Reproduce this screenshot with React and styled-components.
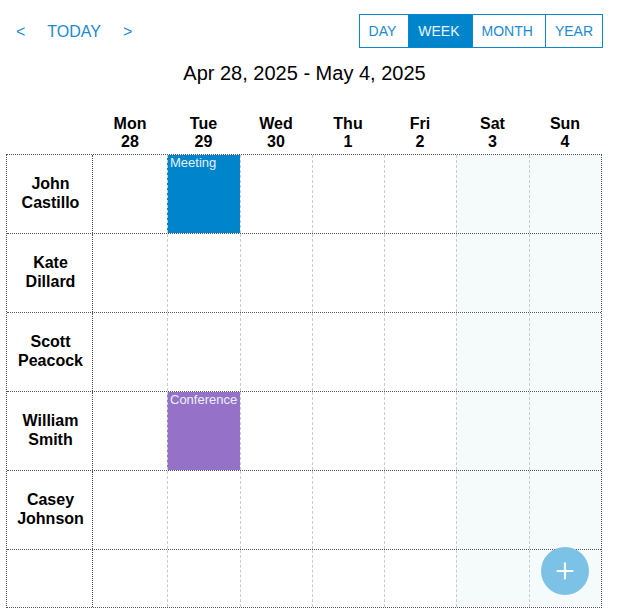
import React from 'react';
import styled, { createGlobalStyle } from 'styled-components';
import { Plus } from 'lucide-react';

const GlobalStyle = createGlobalStyle`
  *, *::before, *::after {
    box-sizing: border-box;
  }

  body {
    margin: 0;
    background: #fff;
    font-family: 'Liberation Sans', Arial, sans-serif;
    color: #000;
  }
`;

const COLUMNS = '86px 74px 73px 72px 72px 72px 73px 72px';

const Page = styled.div`
  width: 597px;
  margin-left: 6px;
`;

const Toolbar = styled.div`
  display: flex;
  align-items: center;
  justify-content: space-between;
  padding-top: 14px;
`;

const NavGroup = styled.div`
  display: flex;
  margin-left: -1px;
  padding-top: 2px;
`;

const NavButton = styled.button`
  border: none;
  background: none;
  padding: 0 11px;
  font-family: inherit;
  font-size: 16px;
  color: #1a8ad2;
  cursor: pointer;
`;

const ViewGroup = styled.div`
  display: flex;
  border: 1px solid #0a88cc;
`;

const ViewButton = styled.button`
  height: 32px;
  border: none;
  padding: 0 12px 0 9px;
  font-family: inherit;
  font-size: 14px;
  cursor: pointer;
  color: ${(p) => (p.$active ? '#e8f4ff' : '#1a8ad2')};
  background: ${(p) => (p.$active ? '#0085cc' : '#fff')};

  & + & {
    border-left: 1px solid #0a88cc;
  }

  &:last-child {
    padding-right: 9px;
  }
`;

const Title = styled.h2`
  margin: 14px 0 0;
  text-align: center;
  font-size: 20px;
  font-weight: 400;
  line-height: 23px;
`;

const Header = styled.div`
  display: grid;
  grid-template-columns: ${COLUMNS};
  margin-top: 30px;
  padding-left: 1px;
`;

const DayLabel = styled.div`
  text-align: center;
  font-size: 16px;
  font-weight: 700;
  line-height: 18.4px;
`;

const Board = styled.div`
  position: relative;
  margin-top: 2px;
  width: 596px;
  border: 1px dotted #555;
`;

const Row = styled.div`
  display: grid;
  grid-template-columns: ${COLUMNS};
  height: ${(p) => p.$h}px;

  & + & {
    border-top: 1px dotted #555;
  }
`;

const NameCell = styled.div`
  display: flex;
  align-items: center;
  justify-content: center;
  text-align: center;
  padding-left: 2px;
  border-right: 1px dotted #555;
  font-size: 16px;
  font-weight: 700;
  line-height: 18.4px;
`;

const DayCell = styled.div`
  border-left: ${(p) => (p.$first ? 'none' : '1px dashed #ccc')};
  background: ${(p) => p.$bg};
  padding: 0 2px;
  font-size: 13px;
  line-height: 15px;
  color: #e6f0fb;
`;

const Fab = styled.button`
  position: absolute;
  right: 12px;
  bottom: 12px;
  width: 48px;
  height: 48px;
  border: none;
  border-radius: 50%;
  background: #7cc1e6;
  color: #fff;
  display: flex;
  align-items: center;
  justify-content: center;
  cursor: pointer;
`;

const days = [
  { name: 'Mon', date: 28 },
  { name: 'Tue', date: 29 },
  { name: 'Wed', date: 30 },
  { name: 'Thu', date: 1 },
  { name: 'Fri', date: 2 },
  { name: 'Sat', date: 3, weekend: true },
  { name: 'Sun', date: 4, weekend: true },
];

const people = [
  ['John', 'Castillo'],
  ['Kate', 'Dillard'],
  ['Scott', 'Peacock'],
  ['William', 'Smith'],
  ['Casey', 'Johnson'],
  null,
];

const events = [
  { row: 0, day: 1, title: 'Meeting', color: '#0084cc' },
  { row: 3, day: 1, title: 'Conference', color: '#9572c7' },
];

const views = ['DAY', 'WEEK', 'MONTH', 'YEAR'];

const App = () => {
  return (
    <Page>
      <GlobalStyle />
      <Toolbar>
        <NavGroup>
          <NavButton>&lt;</NavButton>
          <NavButton>TODAY</NavButton>
          <NavButton>&gt;</NavButton>
        </NavGroup>
        <ViewGroup>
          {views.map((v) => (
            <ViewButton key={v} $active={v === 'WEEK'}>
              {v}
            </ViewButton>
          ))}
        </ViewGroup>
      </Toolbar>
      <Title>Apr 28, 2025 - May 4, 2025</Title>
      <Header>
        <div />
        {days.map((d) => (
          <DayLabel key={d.name}>
            {d.name}
            <br />
            {d.date}
          </DayLabel>
        ))}
      </Header>
      <Board>
        {people.map((person, r) => (
          <Row key={r} $h={person ? (r === 0 ? 78 : 79) : 58}>
            <NameCell>
              {person && (
                <>
                  {person[0]}
                  <br />
                  {person[1]}
                </>
              )}
            </NameCell>
            {days.map((d, i) => {
              const ev = events.find((e) => e.row === r && e.day === i);
              const bg = ev ? ev.color : d.weekend ? '#f5fbfb' : '#fff';
              return (
                <DayCell key={d.name} $first={i === 0} $bg={bg}>
                  {ev && ev.title}
                </DayCell>
              );
            })}
          </Row>
        ))}
        <Fab>
          <Plus size={26} strokeWidth={2} />
        </Fab>
      </Board>
    </Page>
  );
};

export default App;
